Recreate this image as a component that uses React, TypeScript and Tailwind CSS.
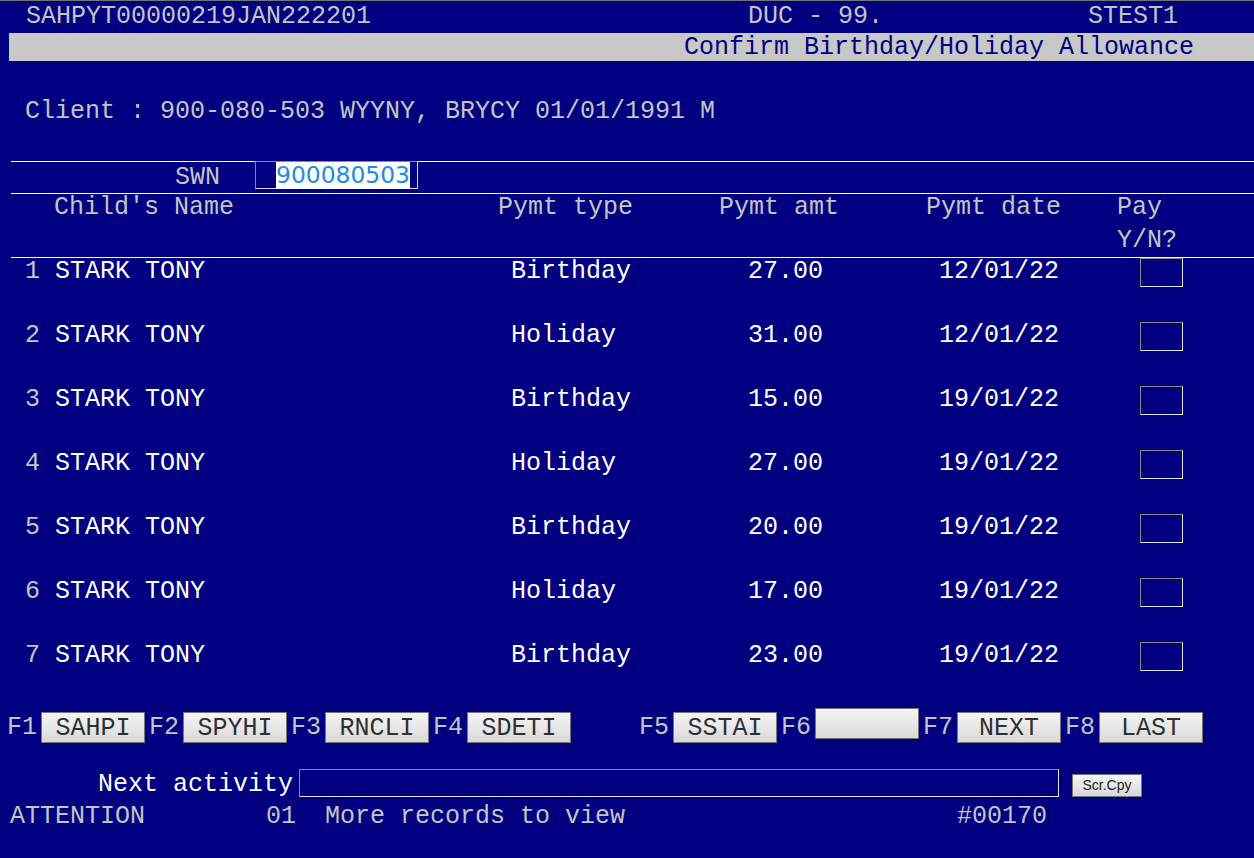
import React from "react"

const rows = [
  { no: 1, name: "STARK TONY", type: "Birthday", amt: "27.00", date: "12/01/22" },
  { no: 2, name: "STARK TONY", type: "Holiday", amt: "31.00", date: "12/01/22" },
  { no: 3, name: "STARK TONY", type: "Birthday", amt: "15.00", date: "19/01/22" },
  { no: 4, name: "STARK TONY", type: "Holiday", amt: "27.00", date: "19/01/22" },
  { no: 5, name: "STARK TONY", type: "Birthday", amt: "20.00", date: "19/01/22" },
  { no: 6, name: "STARK TONY", type: "Holiday", amt: "17.00", date: "19/01/22" },
  { no: 7, name: "STARK TONY", type: "Birthday", amt: "23.00", date: "19/01/22" },
]

function FKey({ label, text, raised, last }: { label: string; text: string; raised?: boolean; last?: boolean }) {
  return (
    <div className={`flex items-start shrink-0 ${last ? "" : "mr-[4px]"}`}>
      <span className="w-[34px] shrink-0 leading-[31px] text-[#c4c4c4]">{label}</span>
      <button
        className={`w-[104px] h-[31px] shrink-0 border border-[#767676] bg-linear-to-b from-[#f5f5f5] to-[#d9d9d9] text-[#303030] pt-[2px] leading-[27px] text-center ${raised ? "-mt-[4px]" : ""}`}
      >
        {text}
      </button>
    </div>
  )
}

export default function App() {
  return (
    <div className="w-[1254px] h-[858px] overflow-hidden bg-[#000080] font-['Liberation_Mono',monospace] text-[25px] whitespace-pre">
      <div className="h-px bg-[#747474]" />

      {/* title line */}
      <div className="flex h-[32px] leading-[32px] pl-[26px] text-[#c4c4c4]">
        <span className="w-[722px] shrink-0">SAHPYT00000219JAN222201</span>
        <span className="w-[340px] shrink-0">DUC - 99.</span>
        <span>STEST1</span>
      </div>
      <div className="ml-[9px] h-[28px] bg-[#c8c8c8] pl-[675px] pt-[1px] leading-[27px] text-[#000080]">
        Confirm Birthday/Holiday Allowance
      </div>

      {/* client */}
      <div className="h-[100px] pt-[35px] pl-[25px] leading-[32px] text-[#c4c4c4]">
        Client : 900-080-503 WYYNY, BRYCY 01/01/1991 M
      </div>

      <div className="ml-[11px] h-px bg-white" />
      <div className="flex items-start h-[31px] pl-[175px]">
        <span className="w-[80px] shrink-0 leading-[31px] text-[#c4c4c4]">SWN</span>
        <div className="-mt-px flex items-center w-[163px] h-[28px] border-t border-l border-[#8a8a8a] border-r border-b border-r-[#d8d8d8] border-b-[#d8d8d8] pl-[20px]">
          <span className="bg-white h-[27px] w-[134px] leading-[27px] text-[#1e8be6] font-['DejaVu_Sans',sans-serif] text-[23.4px]">
            900080503
          </span>
        </div>
      </div>
      <div className="ml-[11px] h-px bg-white" />

      {/* header */}
      <div className="flex items-start h-[63px] pl-[54px] leading-[28px] text-[#c4c4c4]">
        <span className="w-[444px] shrink-0">Child's Name</span>
        <span className="w-[221px] shrink-0">Pymt type</span>
        <span className="w-[207px] shrink-0">Pymt amt</span>
        <span className="w-[191px] shrink-0">Pymt date</span>
        <div className="flex flex-col gap-[5px]">
          <span>Pay</span>
          <span>Y/N?</span>
        </div>
      </div>
      <div className="ml-[11px] h-px bg-white" />

      {/* rows */}
      {rows.map(r => (
        <div key={r.no} className="flex items-start h-[64px] pl-[25px] leading-[28px] text-white">
          <span className="w-[30px] shrink-0 text-[#c4c4c4]">{r.no}</span>
          <span className="w-[456px] shrink-0">{r.name}</span>
          <span className="w-[237px] shrink-0">{r.type}</span>
          <span className="w-[191px] shrink-0">{r.amt}</span>
          <span className="w-[201px] shrink-0">{r.date}</span>
          <div className="w-[43px] h-[29px] shrink-0 border-t border-l border-[#8a8a8a] border-r border-b border-r-[#e4e4e4] border-b-[#e4e4e4]" />
        </div>
      ))}

      {/* function keys */}
      <div className="flex items-start pt-[6px] pl-[7px] h-[37px]">
        <FKey label="F1" text="SAHPI" />
        <FKey label="F2" text="SPYHI" />
        <FKey label="F3" text="RNCLI" />
        <div className="mr-[64px]">
          <FKey label="F4" text="SDETI" />
        </div>
        <FKey label="F5" text="SSTAI" />
        <FKey label="F6" text="" raised />
        <FKey label="F7" text="NEXT" />
        <FKey label="F8" text="LAST" last />
      </div>

      {/* next activity */}
      <div className="flex items-start mt-[26px] pl-[98px] h-[28px]">
        <span className="w-[201px] shrink-0 leading-[31px] text-white">Next activity</span>
        <div className="w-[760px] h-[28px] shrink-0 border-t border-l border-[#8a8a8a] border-r border-b border-r-[#e4e4e4] border-b-[#e4e4e4]" />
        <button className="ml-[13px] mt-[5px] w-[70px] h-[23px] border border-[#767676] bg-linear-to-b from-[#f5f5f5] to-[#d9d9d9] font-['Liberation_Sans',Arial,sans-serif] text-[14px] text-[#222] leading-[21px] text-center">
          Scr.Cpy
        </button>
      </div>

      {/* status */}
      <div className="flex mt-[6px] pl-[10px] leading-[28px] text-[#c4c4c4]">
        <span className="w-[256px] shrink-0">ATTENTION</span>
        <span className="w-[59px] shrink-0">01</span>
        <span className="w-[632px] shrink-0">More records to view</span>
        <span>#00170</span>
      </div>
    </div>
  )
}
